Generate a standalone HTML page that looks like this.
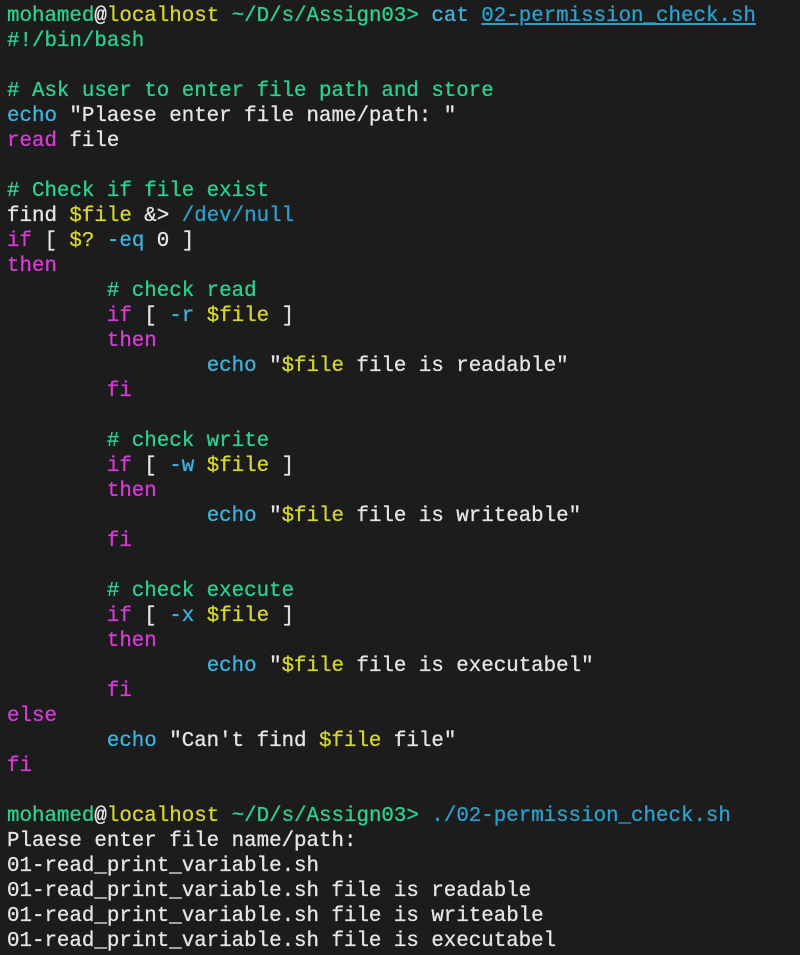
<!DOCTYPE html>
<html><head><meta charset="utf-8"><style>
html,body{margin:0;padding:0;background:#1c1c1c;width:800px;height:955px;overflow:hidden}
pre{margin:0;padding:4px 0 0 7px;font-family:"Liberation Mono","DejaVu Sans Mono",monospace;font-size:20.8px;line-height:25px;color:#e5e5e5;white-space:pre;-webkit-text-stroke:0.3px currentColor}
.g{color:#2bd18e}.y{color:#d6d62a}.c{color:#3bb4e0}.p{color:#2aa0cc}.m{color:#d83ad8}.w{color:#e5e5e5}.u{text-decoration:underline}
</style></head><body><pre><span class="g">mohamed</span>@<span class="y">localhost</span> <span class="g">~/D/s/Assign03&gt;</span> <span class="c">cat</span> <span class="p u">02-permission_check.sh</span>
<span class="g">#!/bin/bash</span>

<span class="g"># Ask user to enter file path and store</span>
<span class="c">echo</span> "Plaese enter file name/path: "
<span class="m">read</span> file

<span class="g"># Check if file exist</span>
find <span class="y">$file</span> &amp;&gt; <span class="p">/dev/null</span>
<span class="m">if</span> [ <span class="y">$?</span> <span class="c">-eq</span> 0 ]
<span class="m">then</span>
        <span class="g"># check read</span>
        <span class="m">if</span> [ <span class="c">-r</span> <span class="y">$file</span> ]
        <span class="m">then</span>
                <span class="c">echo</span> "<span class="y">$file</span> file is readable"
        <span class="m">fi</span>

        <span class="g"># check write</span>
        <span class="m">if</span> [ <span class="c">-w</span> <span class="y">$file</span> ]
        <span class="m">then</span>
                <span class="c">echo</span> "<span class="y">$file</span> file is writeable"
        <span class="m">fi</span>

        <span class="g"># check execute</span>
        <span class="m">if</span> [ <span class="c">-x</span> <span class="y">$file</span> ]
        <span class="m">then</span>
                <span class="c">echo</span> "<span class="y">$file</span> file is executabel"
        <span class="m">fi</span>
<span class="m">else</span>
        <span class="c">echo</span> "Can't find <span class="y">$file</span> file"
<span class="m">fi</span>

<span class="g">mohamed</span>@<span class="y">localhost</span> <span class="g">~/D/s/Assign03&gt;</span> <span class="p">./02-permission_check.sh</span>
Plaese enter file name/path:
01-read_print_variable.sh
01-read_print_variable.sh file is readable
01-read_print_variable.sh file is writeable
01-read_print_variable.sh file is executabel</pre></body></html>
